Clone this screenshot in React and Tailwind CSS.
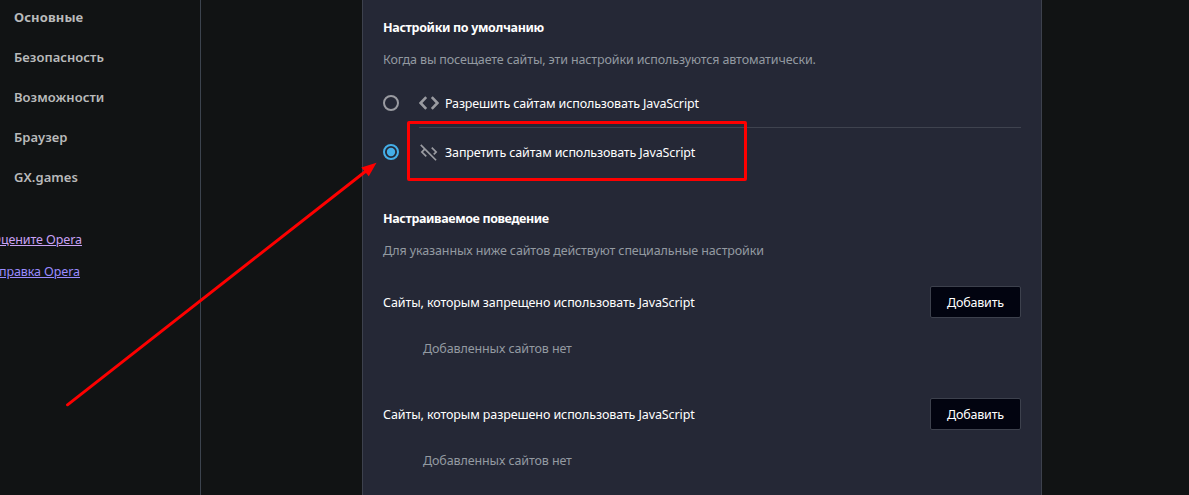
const navItems = ['Основные', 'Безопасность', 'Возможности', 'Браузер', 'GX.games'];

function Radio({ checked }) {
  return (
    <svg width="16" height="16" viewBox="0 0 16 16" fill="none" className={checked ? 'text-[#44aee8]' : 'text-[#9a9ba1]'}>
      <circle cx="8" cy="8" r="7" stroke="currentColor" strokeWidth="2" />
      {checked && <circle cx="8" cy="8" r="4.2" fill="currentColor" />}
    </svg>
  );
}

function CodeIcon() {
  return (
    <svg width="20" height="20" viewBox="0 0 20 20" fill="none" stroke="#9a9ba1" strokeWidth="2.6">
      <path d="M7.2 4.2 1.6 10l5.6 5.8M12.8 4.2l5.6 5.8-5.6 5.8" />
    </svg>
  );
}

function CodeOffIcon() {
  return (
    <svg width="20" height="20" viewBox="0 0 24 24" fill="#9a9ba1">
      <path d="M19.17 12l-4.58-4.59L16 6l6 6-3.59 3.59L17 14.17 19.17 12zM1.39 4.22l4.19 4.19L2 12l6 6 1.41-1.41L4.83 12 7 9.83l12.78 12.78 1.41-1.41L2.81 2.81 1.39 4.22z" />
    </svg>
  );
}

function SiteList({ title, className }) {
  return (
    <div className={className}>
      <div className="flex h-8 items-center justify-between">
        <span className="pt-0.5 tracking-[-0.1px]">{title}</span>
        <button className="h-8 w-[91px] rounded-[2px] border border-[#3d414d] bg-[#020410] pt-0.5 tracking-[-0.2px] text-white">
          Добавить
        </button>
      </div>
      <p className="mt-[15px] h-8 pl-10 leading-8 tracking-[-0.11px] text-[#939aa1]">Добавленных сайтов нет</p>
    </div>
  );
}

export default function App() {
  return (
    <div className="relative flex h-[495px] w-[1189px] overflow-hidden bg-[#111314] font-['Noto_Sans',sans-serif] text-[12.5px] text-white">
      <aside className="w-[201px] shrink-0 overflow-hidden border-r border-[#3c434e]">
        <nav className="-mt-[3px] flex flex-col pl-3.5 text-[13px] font-semibold text-[#b9babb]">
          {navItems.map((item, i) => (
            <a key={item} className={i === 0 ? 'h-10 leading-10 font-bold tracking-[0.1px]' : 'h-10 leading-10 tracking-[0.05px]'}>{item}</a>
          ))}
        </nav>
        <div className="mt-[27px] flex w-[82px] flex-col tracking-[-0.1px]">
          <a className="h-8 self-end leading-8 whitespace-nowrap text-[#c9a2f5] underline">Оцените Opera</a>
          <a className="mr-0.5 h-8 self-end leading-8 whitespace-nowrap text-[#9a8cff] underline">Справка Opera</a>
        </div>
      </aside>

      <main className="ml-[161px] w-[680px] shrink-0 border-x border-[#3d414d] bg-[#252836] pt-3 pr-5 pl-5">
        <h2 className="h-8 leading-8 font-bold tracking-[-0.34px]">Настройки по умолчанию</h2>
        <p className="h-8 leading-8 tracking-[-0.13px] text-[#939aa1]">Когда вы посещаете сайты, эти настройки используются автоматически.</p>

        <div className="mt-[3px] flex h-12 items-center">
          <Radio />
          <div className="ml-5 flex h-full flex-1 items-center gap-1.5">
            <CodeIcon />
            <span className="pt-0.5 tracking-[-0.145px]">Разрешить сайтам использовать JavaScript</span>
          </div>
        </div>
        <div className="ml-9 h-px bg-[#3f434f]" />
        <div className="flex h-12 items-center">
          <Radio checked />
          <div className="ml-5 flex flex-1 items-center gap-1.5">
            <CodeOffIcon />
            <span className="pt-0.5 tracking-[-0.135px]">Запретить сайтам использовать JavaScript</span>
          </div>
        </div>

        <h2 className="mt-[27px] h-8 leading-8 font-bold tracking-[-0.38px]">Настраиваемое поведение</h2>
        <p className="h-8 leading-8 tracking-[-0.13px] text-[#939aa1]">Для указанных ниже сайтов действуют специальные настройки</p>
        <SiteList title="Сайты, которым запрещено использовать JavaScript" className="mt-[19px]" />
        <SiteList title="Сайты, которым разрешено использовать JavaScript" className="mt-[33px]" />
      </main>

      {/* Callout over the blocked option */}
      <div className="absolute top-[121px] left-[407px] h-[60px] w-[340px] rounded-[2px] border-3 border-[#fe0000]" />
      <svg className="absolute inset-0" width="1189" height="495" fill="#fe0000">
        <path d="M67.5 404.8 366 171" stroke="#fe0000" strokeWidth="2.9" strokeLinecap="round" />
        <path d="M376.5 162.8 368.8 176.2 361.3 167.5z" />
      </svg>
    </div>
  );
}
